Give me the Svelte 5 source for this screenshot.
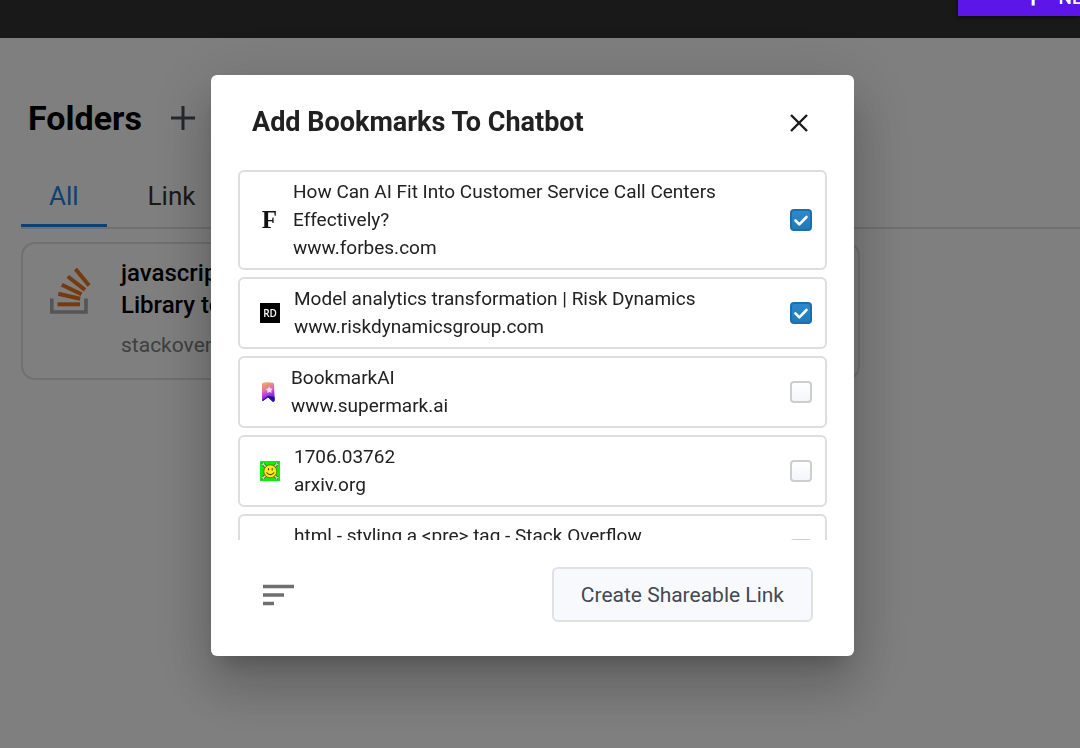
<script>
  let bookmarks = $state([
    { icon: 'forbes', title: 'How Can AI Fit Into Customer Service Call Centers Effectively?', site: 'www.forbes.com', checked: true },
    { icon: 'rd', title: 'Model analytics transformation | Risk Dynamics', site: 'www.riskdynamicsgroup.com', checked: true },
    { icon: 'bookmark', title: 'BookmarkAI', site: 'www.supermark.ai', checked: false },
    { icon: 'arxiv', title: '1706.03762', site: 'arxiv.org', checked: false },
    { icon: 'stack', title: 'html - styling a <pre> tag - Stack Overflow', site: '', checked: false }
  ]);
</script>

<div class="page">
  <header>
    <button class="new"><span class="plus">+</span><span>NE</span></button>
  </header>
  <main>
    <div class="heading">
      <h1>Folders</h1>
      <button class="plain" aria-label="Add folder">
        <svg width="24" height="24" viewBox="0 0 24 24" aria-hidden="true"><path d="M12 0V24M0 12H24" stroke="#4b4f5c" stroke-width="3" /></svg>
      </button>
    </div>
    <nav>
      <a class="active" href="#all">All</a>
      <a href="#link">Link</a>
    </nav>
    <article>
      <svg class="stack-logo" viewBox="0 0 38 48" aria-hidden="true">
        <path d="M1.8 31.500V45H36V31.500" fill="none" stroke="#a9abb0" stroke-width="3.600" />
        <g stroke="#ea7420" stroke-width="4">
          <path d="M7.500 37.300H30" />
          <path d="M8.300 26.800L30.200 31.700" />
          <path d="M11.800 17.700L31.500 27.200" />
          <path d="M17.800 9.500L35 22.800" />
          <path d="M25.500 2L39 18.500" />
        </g>
      </svg>
      <div>
        <h2>javascript<br />Library to</h2>
        <p>stackoverflow</p>
      </div>
    </article>
  </main>
</div>

<div class="backdrop">
  <div class="dialog" role="dialog" aria-modal="true" aria-labelledby="dialog-title">
    <div class="title">
      <h2 id="dialog-title">Add Bookmarks To Chatbot</h2>
      <button class="plain" aria-label="Close">
        <svg width="18" height="18" viewBox="0 0 18 18" aria-hidden="true"><path d="M1 1L17 17M17 1L1 17" stroke="#18191b" stroke-width="2.400" /></svg>
      </button>
    </div>
    <div class="list">
      {#each bookmarks as b, i}
        <label class="item" for="bookmark-{i}">
          {#if b.icon === 'forbes'}
            <span class="icon forbes">F</span>
          {:else if b.icon === 'rd'}
            <span class="icon rd">RD</span>
          {:else if b.icon === 'bookmark'}
            <svg class="icon narrow" viewBox="0 0 17 20" aria-hidden="true">
              <defs>
                <linearGradient id="ribbon" x1="0.3" y1="0" x2="0.6" y2="1">
                  <stop offset="0" stop-color="#eeaa55" />
                  <stop offset="0.38" stop-color="#e070a8" />
                  <stop offset="0.7" stop-color="#962cee" />
                  <stop offset="1" stop-color="#3b12d8" />
                </linearGradient>
              </defs>
              <path d="M2 1.500Q5 -0.500 13 0.800L14 2L14.700 18Q14.500 20.300 12.500 19.500L8 15.300L3 19L2 18.500Z" fill="url(#ribbon)" />
              <path d="M8 13.700L14.600 15V18Q14.500 20.300 12.500 19.500L8 15.300L3 19L2 18.500Z" fill="#25109c" />
              <path d="M9.200 4.300L10.400 6.400L12.800 6.700L11.200 8.400L11.700 10.800L9.300 9.900L7.300 11L7.500 8.700L5.700 7.100L8.100 6.500Z" fill="#f6dce8" />
            </svg>
          {:else if b.icon === 'arxiv'}
            <svg class="icon" viewBox="0 0 20 20" aria-hidden="true">
              <rect width="20" height="20" fill="#06f20c" />
              <g stroke-linecap="round">
                <path d="M3 3L17 17M17 3L3 17" stroke="#5c4a31" stroke-width="3" />
                <path d="M3 3L17 17M17 3L3 17" stroke="#e4d8cc" stroke-width="1.600" />
                <path d="M2 3.500H3.500V2M16.500 2V3.500H18M2 16.500H3.500V18M16.500 18V16.500H18" fill="none" stroke="#d9c6bd" stroke-width="1.200" />
              </g>
              <circle cx="10.300" cy="10.300" r="6.500" fill="#fbe812" stroke="#5f5b06" stroke-width="0.800" />
              <path d="M8.500 7.200V9.200M12.200 7.200V9.200M6.500 11.500Q10.300 16 14.200 11.500" fill="none" stroke="#43390b" stroke-width="1.100" />
            </svg>
          {:else}
            <span class="icon"></span>
          {/if}
          <span class="text">
            <span>{b.title}</span>
            <span>{b.site}&nbsp;</span>
          </span>
          <input id="bookmark-{i}" type="checkbox" bind:checked={b.checked} />
        </label>
      {/each}
    </div>
    <div class="actions">
      <button class="plain" aria-label="Sort">
        <svg width="32" height="22" viewBox="0 0 32 22" aria-hidden="true"><path d="M0 2.500H31M0 11H21M0 19.500H11" stroke="#6f6f6f" stroke-width="3.600" /></svg>
      </button>
      <button class="share">Create Shareable Link</button>
    </div>
  </div>
</div>

<style>
  :global(body) {
    margin: 0;
    background: #fff;
    font-family: Roboto, sans-serif;
  }
  h1, h2, p {
    margin: 0;
  }
  button {
    font-family: inherit;
    cursor: pointer;
  }
  .plain {
    display: flex;
    padding: 0;
    border: 0;
    background: none;
  }
  .page {
    height: 100vh;
    overflow: hidden;
  }
  header {
    display: flex;
    justify-content: flex-end;
    align-items: flex-end;
    height: 38px;
    box-sizing: border-box;
    padding-bottom: 22px;
    background: #323232;
    overflow: hidden;
  }
  .new {
    position: relative;
    z-index: 3;
    display: flex;
    flex: none;
    gap: 18px;
    width: 122px;
    height: 48px;
    padding: 20px 0 0 68px;
    border: 0;
    background: #5c17e8;
    color: #fff;
    font-size: 19px;
    font-weight: 500;
    line-height: 20px;
    white-space: nowrap;
    box-shadow: 0 2px 4px rgba(0, 0, 0, 0.5);
  }
  .plus {
    font-size: 26px;
  }
  .heading {
    display: flex;
    align-items: center;
    gap: 29px;
    padding: 60px 28px 0;
  }
  h1 {
    font-size: 34px;
    line-height: 40px;
    font-weight: 700;
  }
  nav {
    display: flex;
    gap: 13px;
    margin: 24px 0 13px 21px;
    border-bottom: 2px solid #e0e0e0;
  }
  nav a {
    padding: 20px 28px 14px;
    border-bottom: 3px solid transparent;
    color: #333;
    font-size: 26px;
    line-height: 28px;
    text-decoration: none;
  }
  nav .active {
    border-color: #1a80e6;
    color: #1a80e6;
  }
  article {
    display: flex;
    gap: 33px;
    box-sizing: border-box;
    max-width: 839px;
    margin-left: 21px;
    padding: 13px 27px 19px;
    border: 2px solid #e0e0e0;
    border-radius: 14px;
  }
  .stack-logo {
    flex: none;
    width: 38px;
    height: 48px;
    margin-top: 10px;
    overflow: visible;
  }
  article h2 {
    font-size: 24px;
    line-height: 32px;
    font-weight: 500;
  }
  article p {
    margin-top: 10px;
    color: #808080;
    font-size: 21px;
    line-height: 28px;
  }
  .backdrop {
    position: fixed;
    inset: 0;
    z-index: 2;
    display: flex;
    justify-content: center;
    align-items: flex-start;
    padding: 75px 15px 24px 0;
    background: rgba(0, 0, 0, 0.5);
  }
  .dialog {
    box-sizing: border-box;
    width: 100%;
    max-width: 643px;
    padding: 30px 27px 34px;
    border-radius: 6px;
    background: #fff;
    color: #212121;
    box-shadow: 0 15px 21px -10px rgba(0, 0, 0, 0.2), 0 33px 52px 4px rgba(0, 0, 0, 0.14), 0 12px 63px 11px rgba(0, 0, 0, 0.12);
  }
  .title {
    display: flex;
    justify-content: space-between;
    align-items: center;
    padding: 0 19px 0 14px;
  }
  .title h2 {
    font-size: 27px;
    line-height: 35px;
    font-weight: 700;
  }
  .list {
    display: flex;
    flex-direction: column;
    gap: 7px;
    height: 370px;
    margin-top: 30px;
    overflow: hidden;
  }
  .item {
    display: flex;
    flex: none;
    align-items: center;
    gap: 14px;
    padding: 6px 13px 6px 20px;
    border: 2px solid #dedede;
    border-radius: 6px;
  }
  .icon {
    flex: none;
    width: 20px;
    height: 20px;
  }
  .narrow {
    width: 17px;
  }
  .forbes {
    width: 19px;
    font: 700 25px/20px "Liberation Serif", serif;
    color: #111;
    text-align: center;
  }
  .rd {
    background: #000;
    color: #fff;
    font: 600 10px/20px "Open Sans", sans-serif;
    text-align: center;
  }
  .text {
    display: flex;
    flex: 1;
    flex-direction: column;
    padding-right: 30px;
    font-size: 19px;
    line-height: 28px;
  }
  input {
    appearance: none;
    flex: none;
    width: 22px;
    height: 22px;
    margin: 0;
    border: 2px solid #cccfd2;
    border-radius: 4px;
    background: linear-gradient(#fff, #f3f5f8);
  }
  input:checked {
    border-color: #1f6ea9;
    background: url("data:image/svg+xml,%3Csvg xmlns='http://www.w3.org/2000/svg' viewBox='0 0 18 18'%3E%3Cpath d='M3.500 9.500L7.300 13.300L14.500 6' fill='none' stroke='white' stroke-width='2.600' stroke-linecap='round' stroke-linejoin='round'/%3E%3C/svg%3E"), linear-gradient(#2f88c8, #1c7cc0);
  }
  .actions {
    display: flex;
    justify-content: space-between;
    align-items: center;
    margin-top: 27px;
    padding: 0 14px 0 25px;
  }
  .share {
    height: 55px;
    padding: 0 27px;
    border: 2px solid #dfe1e5;
    border-radius: 6px;
    background: #f8f9fd;
    color: #444a50;
    font-size: 21px;
  }
</style>
